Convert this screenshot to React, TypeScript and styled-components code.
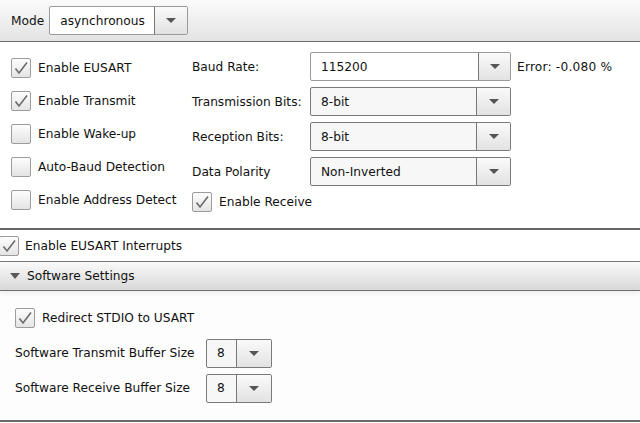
import React from 'react'
import styled, { createGlobalStyle } from 'styled-components'

const GlobalStyle = createGlobalStyle`
  html, body {
    margin: 0;
    padding: 0;
    background: #ffffff;
  }
  body {
    font-family: 'DejaVu Sans', Verdana, sans-serif;
    font-size: 12.2px;
    color: #111111;
  }
`

const Page = styled.div`
  width: 640px;
  height: 423px;
  overflow: hidden;
  background: #ffffff;
  display: flex;
  flex-direction: column;
`

const TopBar = styled.div`
  height: 41px;
  flex-shrink: 0;
  display: flex;
  align-items: center;
  gap: 5px;
  padding-left: 11px;
  background: linear-gradient(#fbfbfb, #e3e3e3);
  border-bottom: 1px solid #6d6d6d;
  box-sizing: content-box;
`

const Label = styled.span`
  white-space: nowrap;
`

const MainSection = styled.div`
  height: 186px;
  flex-shrink: 0;
  display: flex;
  padding-left: 11px;
  border-bottom: 2px solid #666666;
`

const LeftColumn = styled.div`
  width: 181px;
  padding-top: 9px;
  display: flex;
  flex-direction: column;
`

const CheckRow = styled.label<{ height?: number; gap?: number }>`
  display: flex;
  align-items: center;
  align-self: start;
  gap: ${(p) => p.gap ?? 7}px;
  height: ${(p) => p.height ?? 33}px;
  white-space: nowrap;
`

const SettingsGrid = styled.div`
  padding-top: 10px;
  display: grid;
  grid-template-columns: 118px 201px auto;
  grid-auto-rows: 29px;
  row-gap: 6px;
  align-items: center;
`

const ErrorText = styled.span`
  margin-left: 6px;
  white-space: nowrap;
  letter-spacing: 0.2px;
`

const Box = styled.span`
  width: 20px;
  height: 20px;
  flex-shrink: 0;
  box-sizing: border-box;
  border: 1px solid #9c9c9c;
  border-radius: 2px;
  background: linear-gradient(#fdfdfd, #e4e4e4);
  display: flex;
  align-items: center;
  justify-content: center;
`

const ComboShell = styled.div<{ width: number; filled?: boolean }>`
  width: ${(p) => p.width}px;
  height: 29px;
  box-sizing: border-box;
  display: flex;
  border: 1px solid ${(p) => (p.filled ? '#7a7a7a' : '#9a9a9a')};
  border-radius: 2px;
  background: ${(p) => (p.filled ? '#f7f7f7' : '#ffffff')};
  overflow: hidden;
`

const ComboValue = styled.span`
  flex: 1;
  display: flex;
  align-items: center;
  padding-left: 10px;
  white-space: nowrap;
`

const ComboButton = styled.span<{ width: number }>`
  width: ${(p) => p.width}px;
  flex-shrink: 0;
  display: flex;
  align-items: center;
  justify-content: center;
  border-left: 1px solid #777777;
  background: linear-gradient(#fafafa, #e2e2e2);
`

const Arrow = styled.span`
  width: 0;
  height: 0;
  border-left: 5px solid transparent;
  border-right: 5px solid transparent;
  border-top: 5px solid #555555;
`

const InterruptRow = styled.div`
  height: 31px;
  flex-shrink: 0;
  display: flex;
  align-items: center;
  margin-left: -1px;
  border-bottom: 1px solid #7a7a7a;
`

const SectionHeader = styled.div`
  height: 28px;
  flex-shrink: 0;
  display: flex;
  align-items: center;
  gap: 7px;
  padding-left: 10px;
  background: linear-gradient(#fafafa, #d8d8d8);
  border-bottom: 1px solid #6f6f6f;
  box-shadow: 0 2px 5px rgba(0, 0, 0, 0.07);
  position: relative;
  z-index: 1;
`

const HeaderArrow = styled.span`
  width: 0;
  height: 0;
  border-left: 5px solid transparent;
  border-right: 5px solid transparent;
  border-top: 6px solid #5a5a5a;
`

const SectionBody = styled.div`
  height: 112px;
  flex-shrink: 0;
  padding: 17px 15px 0;
  background: #fdfdfd;
  border-bottom: 2px solid #6a6a6a;
  display: flex;
  flex-direction: column;
`

const BufferGrid = styled.div`
  margin-top: 10px;
  display: grid;
  grid-template-columns: 191px 66px;
  grid-auto-rows: 30px;
  row-gap: 5px;
  align-items: center;
`

const CheckMark = () => (
  <svg width="16" height="16" viewBox="0 0 16 16">
    <path d="M2.5 8.5 L6 13 L14 2.5" fill="none" stroke="#6b6b6b" strokeWidth="1.6" />
  </svg>
)

const Checkbox = ({ checked }: { checked?: boolean }) => <Box>{checked && <CheckMark />}</Box>

const Combo = ({
  value,
  width,
  buttonWidth = 32,
  filled,
}: {
  value: string
  width: number
  buttonWidth?: number
  filled?: boolean
}) => (
  <ComboShell width={width} filled={filled}>
    <ComboValue>{value}</ComboValue>
    <ComboButton width={buttonWidth}>
      <Arrow />
    </ComboButton>
  </ComboShell>
)

const leftOptions = [
  { label: 'Enable EUSART', checked: true },
  { label: 'Enable Transmit', checked: true },
  { label: 'Enable Wake-up', checked: false },
  { label: 'Auto-Baud Detection', checked: false },
  { label: 'Enable Address Detect', checked: false },
]

export default function App() {
  return (
    <Page>
      <GlobalStyle />
      <TopBar>
        <Label>Mode</Label>
        <Combo value="asynchronous" width={139} buttonWidth={32} />
      </TopBar>

      <MainSection>
        <LeftColumn>
          {leftOptions.map((o) => (
            <CheckRow key={o.label}>
              <Checkbox checked={o.checked} />
              {o.label}
            </CheckRow>
          ))}
        </LeftColumn>
        <SettingsGrid>
          <Label>Baud Rate:</Label>
          <Combo value="115200" width={201} buttonWidth={31} />
          <ErrorText>Error: -0.080 %</ErrorText>

          <Label>Transmission Bits:</Label>
          <Combo value="8-bit" width={201} buttonWidth={33} filled />
          <span />

          <Label>Reception Bits:</Label>
          <Combo value="8-bit" width={201} buttonWidth={33} filled />
          <span />

          <Label>Data Polarity</Label>
          <Combo value="Non-Inverted" width={201} buttonWidth={33} filled />
          <span />

          <CheckRow height={20}>
            <Checkbox checked />
            Enable Receive
          </CheckRow>
        </SettingsGrid>
      </MainSection>

      <InterruptRow>
        <CheckRow height={31} gap={6}>
          <Checkbox checked />
          Enable EUSART Interrupts
        </CheckRow>
      </InterruptRow>

      <SectionHeader>
        <HeaderArrow />
        <Label>Software Settings</Label>
      </SectionHeader>

      <SectionBody>
        <CheckRow height={20}>
          <Checkbox checked />
          Redirect STDIO to USART
        </CheckRow>
        <BufferGrid>
          <Label>Software Transmit Buffer Size</Label>
          <Combo value="8" width={66} buttonWidth={34} filled />
          <Label>Software Receive Buffer Size</Label>
          <Combo value="8" width={66} buttonWidth={34} filled />
        </BufferGrid>
      </SectionBody>
    </Page>
  )
}
